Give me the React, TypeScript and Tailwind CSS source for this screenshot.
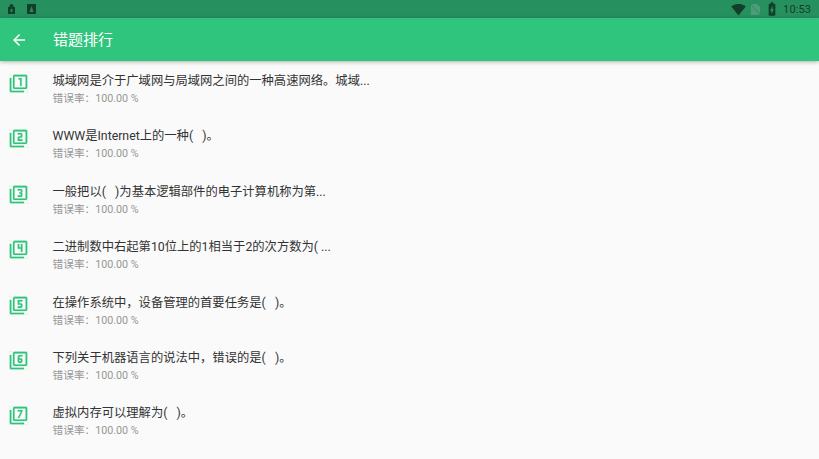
import { MdFilter1, MdFilter2, MdFilter3, MdFilter4, MdFilter5, MdFilter6, MdFilter7, MdArrowBack, MdSignalWifi4Bar, MdBatteryChargingFull } from "react-icons/md";

const rows = [
  [MdFilter1, "城域网是介于广域网与局域网之间的一种高速网络。城域..."],
  [MdFilter2, "WWW是Internet上的一种(   )。"],
  [MdFilter3, "一般把以(   )为基本逻辑部件的电子计算机称为第..."],
  [MdFilter4, "二进制数中右起第10位上的1相当于2的次方数为( ..."],
  [MdFilter5, "在操作系统中，设备管理的首要任务是(   )。"],
  [MdFilter6, "下列关于机器语言的说法中，错误的是(   )。"],
  [MdFilter7, "虚拟内存可以理解为(   )。"],
] as const;

export default function App() {
  return (
    <div className="flex h-[459px] w-[819px] flex-col overflow-hidden bg-[#fafafa] font-['Roboto','Noto_Sans_CJK_SC',sans-serif]">
      <div className="flex h-[18px] shrink-0 items-center justify-between bg-[#26905f] pl-[7px] pr-[8px]">
        <div className="flex items-center gap-[11px]">
          <svg width="9" height="10" viewBox="0 0 9 10"><path d="M2.5 3V2a2 2 0 0 1 4 0v1H8v7H1V3z" fill="#123f2b" /><rect x="3.5" y="5" width="2" height="3" fill="#2a8a5c" /></svg>
          <svg width="9" height="10" viewBox="0 0 9 10"><rect x="0" y="0" width="9" height="10" fill="#123f2b" /><path d="M2.5 8 4.5 2l2 6z" fill="#2a8a5c" /></svg>
        </div>
        <div className="flex items-center">
          <MdSignalWifi4Bar className="mr-[5px] h-[15px] w-[15px] text-[#123f2b]" />
          <svg width="9" height="11" viewBox="0 0 9 11" className="mr-[4px]"><path d="M0 0h6l3 3v8H0z" fill="#4e9c78" /><path d="M0 0l9 11" stroke="#26905f" strokeWidth="1" /></svg>
          <MdBatteryChargingFull className="mr-[3px] h-[16px] w-[16px] text-[#123f2b]" />
          <span className="text-[11px] leading-none tracking-[0.1px] text-[#123f2b]">10:53</span>
        </div>
      </div>
      <div className="z-10 flex h-[43px] shrink-0 items-center bg-[#2fc57c] shadow-[0_1px_4px_rgba(0,0,0,0.3)]">
        <MdArrowBack className="ml-[10px] mt-[1px] h-[18px] w-[18px] text-white" />
        <span className="ml-[25px] mt-[2px] text-[15px] leading-none text-white">错题排行</span>
      </div>
      <div className="flex flex-col pt-[11px]">
        {rows.map(([Icon, title], i) => (
          <div key={i} className="flex h-[55.4px] items-start">
            <Icon className="ml-[9px] mt-[2px] h-[19px] w-[19px] shrink-0 stroke-[0.2] text-[#2fc57c]" />
            <div className="ml-[24.5px] flex flex-col">
              <span className="whitespace-pre text-[12.3px] leading-[18px] text-[#333333]">{title}</span>
              <span className="mt-[2px] text-[10.7px] leading-[14px] text-[#969696]">错误率：100.00 %</span>
            </div>
          </div>
        ))}
      </div>
    </div>
  );
}
